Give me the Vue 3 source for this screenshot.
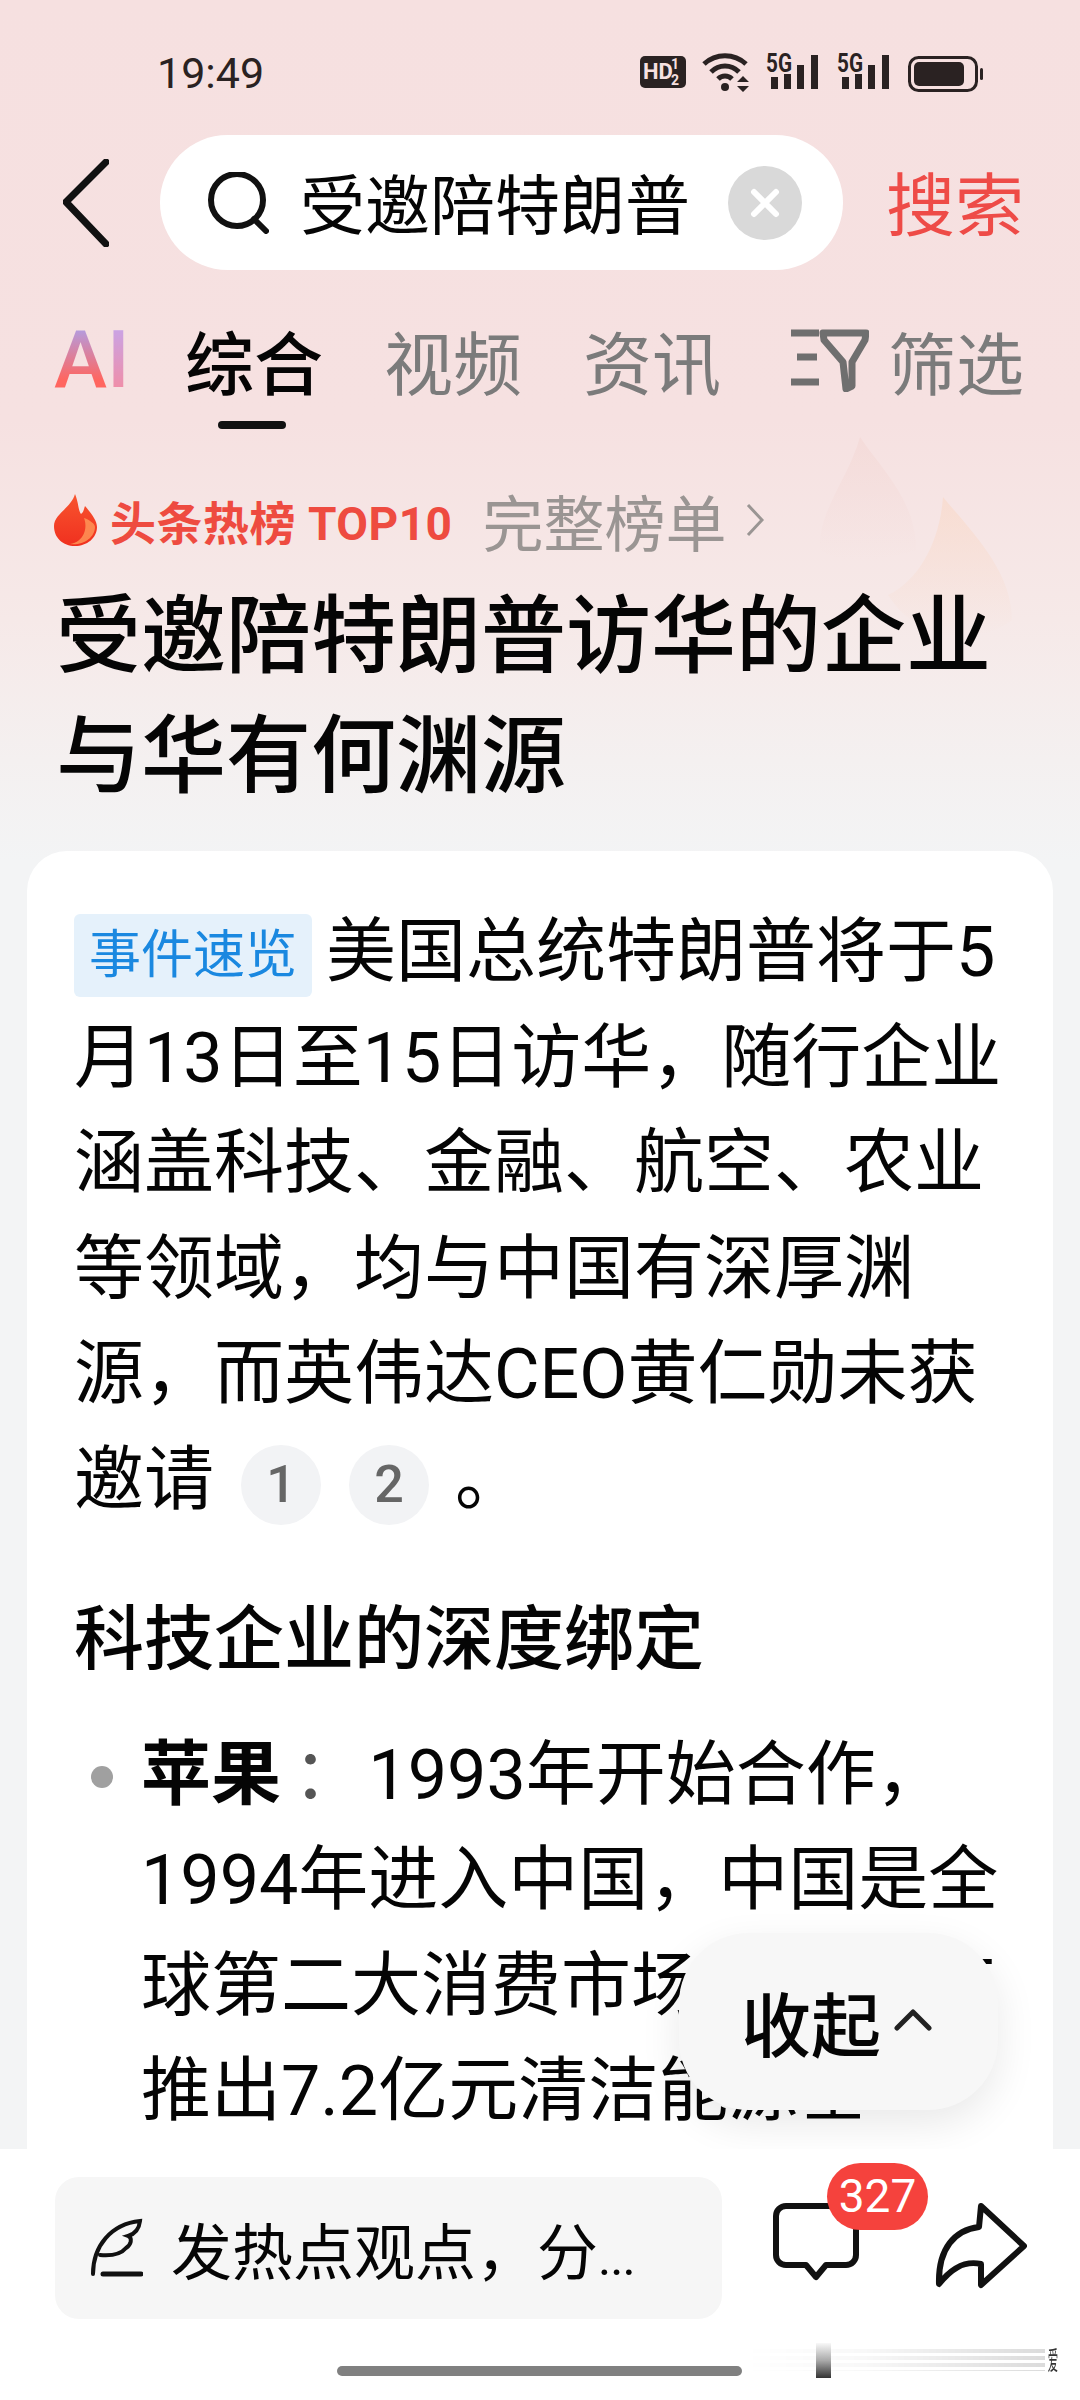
<script setup>
const tabs = ['视频', '资讯']
</script>

<template>
  <div class="page">
    <!-- faint flames behind the title -->
    <svg class="bg-flames" width="210" height="220" viewBox="0 0 210 220">
      <defs>
        <linearGradient id="f1" x1="0" y1="0" x2="0" y2="1">
          <stop offset="0" stop-color="#f2d3cf" stop-opacity="0.42" />
          <stop offset="1" stop-color="#f2d3cf" stop-opacity="0" />
        </linearGradient>
        <linearGradient id="f2" x1="0" y1="0" x2="0" y2="1">
          <stop offset="0" stop-color="#f9d8c6" stop-opacity="0.6" />
          <stop offset="1" stop-color="#f9d8c6" stop-opacity="0" />
        </linearGradient>
      </defs>
      <path d="M50 7 C72 40 106 70 106 120 C90 125 40 140 10 120 C8 80 38 50 50 7Z" fill="url(#f1)" />
      <path d="M133 67 C160 100 202 140 202 190 C170 215 110 215 78 165 C110 150 130 110 133 67Z" fill="url(#f2)" />
    </svg>

    <header class="top">
      <div class="status">
        <span class="time">19:49</span>
        <div class="status-icons">
          <svg width="46" height="32" viewBox="0 0 46 32">
            <rect width="46" height="32" rx="5" fill="#2a2222" />
            <text x="3" y="23" class="hd">HD</text>
            <text x="31" y="13" class="frac">1</text>
            <text x="31" y="29" class="frac">2</text>
          </svg>
          <svg width="50" height="40" viewBox="0 0 50 40" class="wifi">
            <path d="M3 12 C15 1 33 1 45 12" />
            <path d="M10 20 C18 12 30 12 38 20" />
            <path d="M17 27 C21 23 27 23 31 27" />
            <circle cx="24" cy="35" r="4" fill="#2a2222" stroke="none" />
            <path d="M36 30 L42 24 L48 30Z M36 34 L48 34 L42 40Z" fill="#2a2222" stroke="none" />
          </svg>
          <svg v-for="n in 2" :key="n" class="signal" width="56" height="40" viewBox="0 0 56 40">
            <text x="0" y="20" class="fiveg" textLength="26" lengthAdjust="spacingAndGlyphs">5G</text>
            <rect x="5" y="25" width="7" height="12" fill="#2a2222" />
            <rect x="18" y="22" width="7" height="15" fill="#2a2222" />
            <rect x="31" y="13" width="7" height="24" fill="#2a2222" />
            <rect x="45" y="3" width="7" height="34" fill="#2a2222" />
          </svg>
          <svg width="76" height="36" viewBox="0 0 76 36">
            <rect x="1.5" y="1.5" width="67" height="33" rx="9" fill="none" stroke="#2a2222" stroke-width="3" />
            <rect x="6" y="6" width="50" height="24" rx="5" fill="#2a2222" />
            <rect x="72" y="12" width="3" height="12" rx="1.5" fill="#2a2222" />
          </svg>
        </div>
      </div>

      <div class="search-row">
        <svg class="back" width="46" height="88" viewBox="0 0 46 88">
          <path d="M43 3 L3 43 L43 85" fill="none" stroke="#111" stroke-width="7" stroke-linecap="round" stroke-linejoin="round" />
        </svg>
        <div class="search-box">
          <svg width="62" height="62" viewBox="0 0 62 62">
            <circle cx="30" cy="28" r="26" fill="none" stroke="#111" stroke-width="6" />
            <path d="M47 47 L59 59" stroke="#111" stroke-width="6" stroke-linecap="round" />
          </svg>
          <span class="query">受邀陪特朗普</span>
          <span class="clear">
            <svg width="32" height="32" viewBox="0 0 32 32">
              <path d="M5 5 L27 27 M27 5 L5 27" stroke="#fff" stroke-width="6" stroke-linecap="round" />
            </svg>
          </span>
        </div>
        <span class="search-btn">搜索</span>
      </div>

      <nav class="tabs">
        <span class="ai"><span class="ai-a">A</span><span class="ai-i">I</span></span>
        <span class="tab active">综合</span>
        <span v-for="t in tabs" :key="t" class="tab">{{ t }}</span>
        <span class="filter">
          <svg width="78" height="64" viewBox="0 0 78 64" fill="none" stroke="#6f6f6f" stroke-width="7">
            <path d="M0 5 H28 M6 29 H26 M0 54 H28" />
            <path d="M32 5 H75 L74 12 L61 34 V58 L55 61 L52 34 L33 12Z" stroke-linejoin="round" />
          </svg>
          <span>筛选</span>
        </span>
      </nav>

      <div class="hot">
        <svg width="43" height="52" viewBox="0 0 43 52">
          <defs>
            <linearGradient id="fl" x1="0" y1="0" x2="0" y2="1">
              <stop offset="0" stop-color="#f8552f" />
              <stop offset="1" stop-color="#f0301f" />
            </linearGradient>
          </defs>
          <path d="M21 0 C25 10 24 16 27 20 C30 18 30 14 31 12 C38 20 43 27 43 33 C43 44 33 52 21 52 C9 52 0 44 0 32 C0 20 17 14 21 0Z" fill="url(#fl)" />
          <path d="M30 24 C34 34 30 48 16 50 C28 52 41 44 41 33 C41 30 36 26 30 24Z" fill="#ff9a5a" opacity="0.8" />
        </svg>
        <span class="hot-label">头条热榜 TOP10</span>
        <span class="hot-more">完整榜单</span>
        <svg width="18" height="34" viewBox="0 0 18 34">
          <path d="M2 2 L16 17 L2 32" fill="none" stroke="#9a9593" stroke-width="3" />
        </svg>
      </div>

      <h1 class="title">受邀陪特朗普访华的企业与华有何渊源</h1>
    </header>

    <main class="content">
      <section class="card">
        <p class="para">
          <span class="tag">事件速览</span>美国总统特朗普将于5月13日至15日访华，随行企业涵盖科技、金融、航空、农业等领域，均与中国有深厚渊源，而英伟达CEO黄仁勋未获邀请<span class="cite first">1</span><span class="cite">2</span><span class="stop">。</span>
        </p>
        <h2 class="heading">科技企业的深度绑定</h2>
        <ul class="list">
          <li><b>苹果</b><span class="colon">：</span> 1993年开始合作，1994年进入中国，中国是全球第二大消费市场，2015年推出7.2亿元清洁能源基</li>
        </ul>
      </section>
    </main>

    <div class="collapse">
      <span>收起</span>
      <svg width="38" height="22" viewBox="0 0 38 22">
        <path d="M3 19 L19 3 L35 19" fill="none" stroke="#222" stroke-width="5" stroke-linecap="round" stroke-linejoin="round" />
      </svg>
    </div>

    <footer class="bar">
      <div class="comment-input">
        <svg width="52" height="60" viewBox="0 0 52 60" fill="none" stroke="#111" stroke-width="4" stroke-linecap="round">
          <path d="M2 56 C2 28 20 6 49 3 C48 12 44 16 37 18 C42 20 40 27 35 30 C30 36 20 38 9 37" />
          <path d="M12 56 H50" stroke-width="5" />
        </svg>
        <span>发热点观点，分<span class="dots">...</span></span>
      </div>
      <div class="comment">
        <svg width="86" height="78" viewBox="0 0 86 78">
          <path d="M13 3 H73 a10 10 0 0 1 10 10 V52 a10 10 0 0 1 -10 10 H53 L43 74 L33 62 H13 a10 10 0 0 1 -10 -10 V13 a10 10 0 0 1 10 -10Z" fill="none" stroke="#111" stroke-width="6" stroke-linejoin="round" />
        </svg>
        <span class="badge">327</span>
      </div>
      <svg class="share" width="92" height="86" viewBox="0 0 92 86">
        <path d="M46 3 L89 43 L46 82 V61 C28 57 15 67 4 81 C3 45 20 27 44 24Z" fill="none" stroke="#111" stroke-width="6" stroke-linejoin="round" />
      </svg>
      <div class="home-bar"></div>
      <div class="smear-lines"></div>
      <div class="smear"></div>
      <span class="glitch">爱</span>
    </footer>
  </div>
</template>

<style>
body {
  margin: 0;
  background: #fff;
}
</style>

<style scoped>
.page {
  position: relative;
  width: 1080px;
  height: 2400px;
  overflow: hidden;
  display: flex;
  flex-direction: column;
  font-family: Roboto, "Noto Sans CJK SC", sans-serif;
  color: #050505;
  background: linear-gradient(180deg, #f6e0e0 0, #f6e1e1 420px, #f6e9e8 620px, #f4f0f0 760px, #f3f4f5 860px);
}

.bg-flames {
  position: absolute;
  left: 810px;
  top: 430px;
}

.top {
  position: relative;
}

.status {
  height: 135px;
  display: flex;
  justify-content: space-between;
  box-sizing: border-box;
  padding: 52px 96px 0 157px;
}

.time {
  font-size: 43px;
  line-height: 42px;
  color: #2a2222;
}

.status-icons {
  display: flex;
  align-items: flex-start;
  gap: 15px;
  margin-top: 4px;
}

.wifi {
  fill: none;
  stroke: #2a2222;
  stroke-width: 5;
  margin-top: -4px;
}

.signal {
  margin-top: -4px;
  overflow: visible;
}

.hd {
  font: 700 22px "Roboto", sans-serif;
  fill: #f6e0e0;
}

.frac {
  font: 700 14px "Roboto", sans-serif;
  fill: #f6e0e0;
}

.fiveg {
  font: 700 25px "Roboto", sans-serif;
  fill: #2a2222;
}

.search-row {
  height: 135px;
  display: flex;
  align-items: center;
  padding-left: 63px;
}

.back {
  margin-right: 51px;
}

.search-box {
  width: 683px;
  height: 135px;
  box-sizing: border-box;
  background: #fff;
  border-radius: 68px;
  display: flex;
  align-items: center;
  padding-left: 47px;
}

.query {
  font-size: 65px;
  margin-left: 31px;
  margin-top: -3px;
}

.clear {
  width: 74px;
  height: 74px;
  border-radius: 50%;
  background: #d9d9d9;
  margin-left: 38px;
  display: flex;
  align-items: center;
  justify-content: center;
}

.search-btn {
  font-size: 69px;
  color: #ee4b47;
  margin-left: 43px;
  margin-top: -4px;
}

.tabs {
  height: 120px;
  margin-top: 30px;
  display: flex;
  align-items: center;
  padding-left: 54px;
  font-size: 69px;
  color: #7b7b7b;
}

.ai {
  width: 131px;
  font: 500 80px/1 Roboto, sans-serif;
  display: flex;
}

.ai-a {
  background: linear-gradient(180deg, #a6a6f6, #ff6660 75%);
  -webkit-background-clip: text;
  background-clip: text;
  color: transparent;
}

.ai-i {
  background: linear-gradient(180deg, #c4a6ee, #f78a9c);
  -webkit-background-clip: text;
  background-clip: text;
  color: transparent;
}

.tab {
  position: relative;
  margin-right: 61px;
}

.tab.active {
  color: #050505;
  font-weight: 500;
}

.tab.active::after {
  content: "";
  position: absolute;
  left: 33px;
  bottom: -19px;
  width: 68px;
  height: 8px;
  border-radius: 4px;
  background: #111;
}

.filter {
  display: flex;
  align-items: center;
  gap: 19px;
  margin-left: 9px;
  font-size: 68px;
}

.hot {
  height: 100px;
  margin-top: 50px;
  display: flex;
  align-items: center;
  padding-left: 54px;
}

.hot-label {
  font-size: 46px;
  font-weight: 700;
  letter-spacing: 0.5px;
  color: #ee4b40;
  margin-left: 13px;
  white-space: nowrap;
}

.hot-more {
  font-size: 61px;
  color: #9a9593;
  margin: 0 20px 0 30px;
}

.title {
  margin: 7px 0 0;
  padding: 0 56px;
  font-size: 85px;
  line-height: 120px;
  font-weight: 500;
}

.content {
  flex: 1;
  min-height: 0;
  overflow: hidden;
  padding: 34px 27px 0;
}

.card {
  background: #fff;
  border-radius: 40px 40px 0 0;
  padding: 49px 48px 0 47px;
  font-size: 70px;
  line-height: 105.5px;
  height: 1400px;
}

.para {
  margin: 0;
}

.tag {
  display: inline-block;
  background: #e5f1fb;
  color: #1a88e0;
  font-size: 52px;
  line-height: 83px;
  padding: 0 15px;
  border-radius: 6px;
  margin-right: 14px;
  vertical-align: 3px;
}

.cite {
  display: inline-flex;
  align-items: center;
  justify-content: center;
  width: 80px;
  height: 80px;
  border-radius: 50%;
  background: #f2f3f5;
  color: #666;
  font-size: 52px;
  font-weight: 500;
  line-height: 1;
  vertical-align: middle;
  margin-left: 28px;
}

.cite.first {
  margin-left: 27px;
}

.stop {
  margin-left: 26px;
}

.heading {
  margin: 55px 0 0;
  font-size: 70px;
  line-height: 105.5px;
  font-weight: 500;
}

.list {
  list-style: none;
  margin: 29px 0 0;
  padding: 0 0 0 67px;
}

.list li {
  position: relative;
}

.list li::before {
  content: "";
  position: absolute;
  left: -50px;
  top: 43px;
  width: 22px;
  height: 22px;
  border-radius: 50%;
  background: #a0a0a0;
}

.colon {
  margin-left: 12px;
  margin-right: -12px;
  color: #555;
}

.collapse {
  position: absolute;
  left: 679px;
  top: 1933px;
  width: 319px;
  height: 177px;
  box-sizing: border-box;
  border-radius: 70px;
  background: #f7f7f7;
  box-shadow: 0 14px 40px rgba(0, 0, 0, 0.09);
  display: flex;
  align-items: center;
  padding-left: 62px;
  gap: 13px;
  font-size: 70px;
  font-weight: 500;
}

.collapse svg {
  margin-top: -4px;
}

.bar {
  position: relative;
  height: 251px;
  flex-shrink: 0;
  box-sizing: border-box;
  background: #fff;
  padding: 28px 0 0 55px;
  display: flex;
  align-items: flex-start;
}

.comment-input {
  width: 667px;
  height: 142px;
  flex-shrink: 0;
  box-sizing: border-box;
  background: #f6f6f6;
  border-radius: 24px;
  display: flex;
  align-items: center;
  padding-left: 36px;
  gap: 28px;
  font-size: 61px;
}

.dots {
  font-size: 50px;
  letter-spacing: -1px;
}

.comment {
  position: relative;
  margin: 26px 0 0 51px;
}

.badge {
  position: absolute;
  left: 54px;
  top: -40px;
  width: 101px;
  height: 67px;
  border-radius: 34px;
  background: #f5423d;
  color: #fff;
  font-size: 46px;
  line-height: 67px;
  text-align: center;
}

.share {
  margin: 26px 0 0 76px;
}

.home-bar {
  position: absolute;
  left: 337px;
  top: 217px;
  width: 405px;
  height: 10px;
  border-radius: 5px;
  background: #808080;
}

.smear {
  position: absolute;
  left: 816px;
  top: 194px;
  width: 15px;
  height: 35px;
  background: linear-gradient(180deg, #f8f8f8, #aaa 50%, #333);
}

.smear-lines {
  position: absolute;
  left: 745px;
  top: 200px;
  width: 300px;
  height: 22px;
  background: repeating-linear-gradient(180deg, rgba(0, 0, 0, 0.14) 0 4px, transparent 4px 7px);
  -webkit-mask-image: linear-gradient(90deg, transparent, rgba(0, 0, 0, 0.2) 40%, #000);
  mask-image: linear-gradient(90deg, transparent, rgba(0, 0, 0, 0.2) 40%, #000);
}

.glitch {
  position: absolute;
  left: 1040px;
  top: 198px;
  font-size: 26px;
  line-height: 28px;
  color: #333;
  transform: scaleX(0.4);
}
</style>
